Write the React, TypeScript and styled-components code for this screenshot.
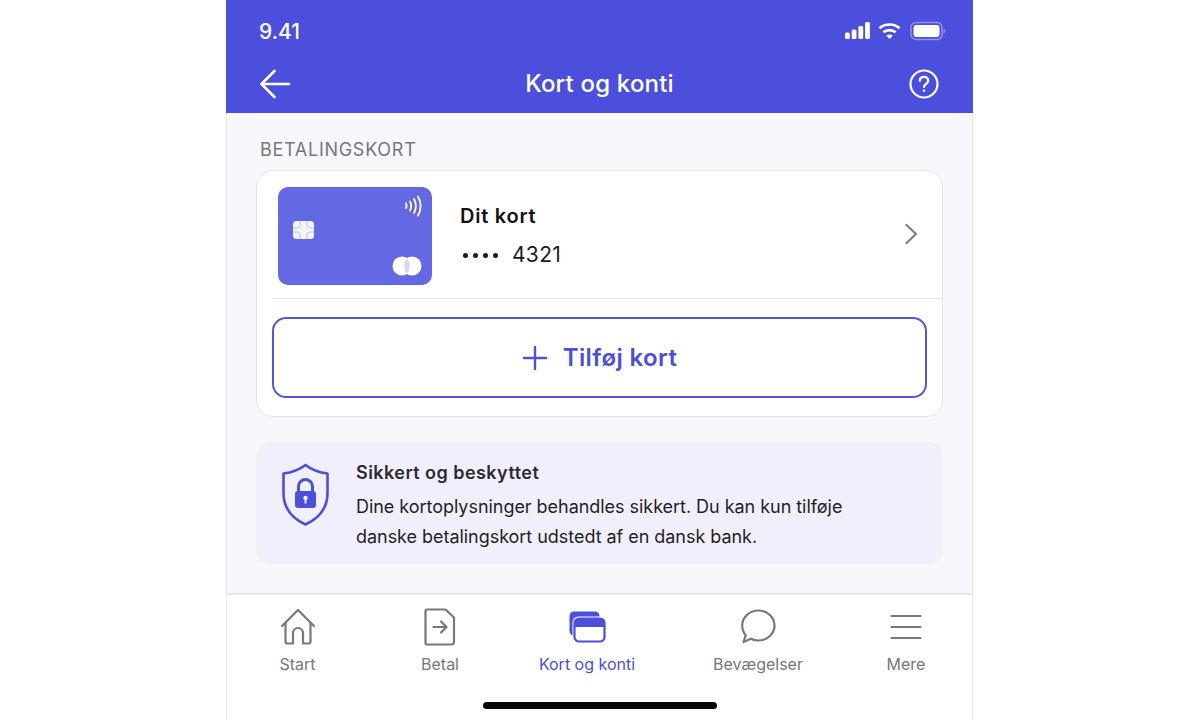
import React from 'react';
import styled, { createGlobalStyle } from 'styled-components';

const GlobalStyle = createGlobalStyle`
  html, body {
    margin: 0;
    padding: 0;
    height: 100%;
    background: #ffffff;
    font-family: Inter, "Liberation Sans", sans-serif;
    overflow: hidden;
  }
`;

const Page = styled.div`
  width: 1200px;
  height: 720px;
  box-sizing: border-box;
  padding-left: 226px;
  display: flex;
  background: #ffffff;
`;

const Phone = styled.div`
  width: 747px;
  height: 720px;
  box-sizing: border-box;
  display: flex;
  flex-direction: column;
  background: #f8f7fc;
  border-left: 1px solid #e6e6ee;
  border-right: 1px solid #e6e6ee;
`;

const Header = styled.header`
  height: 113px;
  margin: 0 -1px;
  flex-shrink: 0;
  background: #4b4fdb;
  color: #ffffff;
  display: flex;
  flex-direction: column;
`;

const StatusBar = styled.div`
  height: 62px;
  padding: 0 27px 0 33px;
  display: flex;
  align-items: center;
  justify-content: space-between;
  font-size: 21px;
  font-weight: 500;
`;

const StatusIcons = styled.div`
  display: flex;
  align-items: center;
  gap: 8px;
`;

const NavBar = styled.div`
  height: 44px;
  padding: 0 34px 0 33px;
  display: flex;
  align-items: center;
  justify-content: space-between;
`;

const Title = styled.h1`
  margin: 0 0 0 -1px;
  font-size: 24px;
  font-weight: 500;
  letter-spacing: 0.2px;
  line-height: 44px;
`;

const Content = styled.main`
  flex: 1;
  padding: 0 29px;
  display: flex;
  flex-direction: column;
`;

const SectionLabel = styled.div`
  height: 57px;
  box-sizing: border-box;
  padding: 25px 0 0 4px;
  font-size: 18px;
  line-height: 24px;
  letter-spacing: 0.72px;
  color: #77777f;
`;

const CardPanel = styled.section`
  height: 247px;
  box-sizing: border-box;
  background: #ffffff;
  border: 1px solid #e4e4ea;
  border-radius: 16px;
  padding: 16px 15px 18px 15px;
  display: flex;
  flex-direction: column;
`;

const CardRow = styled.div`
  height: 112px;
  box-sizing: border-box;
  padding: 0 24px 13px 6px;
  margin-right: -15px;
  border-bottom: 1px solid #e3e3e8;
  display: flex;
  align-items: flex-start;
`;

const BankCard = styled.div`
  position: relative;
  width: 154px;
  height: 98px;
  flex-shrink: 0;
  border-radius: 10px;
  background: #6568e3;
`;

const CardGlyph = styled.svg<{ $left: number; $top: number }>`
  position: absolute;
  left: ${(p) => p.$left}px;
  top: ${(p) => p.$top}px;
`;

const CardInfo = styled.div`
  flex: 1;
  margin-left: 28px;
  display: flex;
  flex-direction: column;
`;

const CardName = styled.div`
  margin-top: 15px;
  font-size: 20px;
  line-height: 28px;
  font-weight: 600;
  letter-spacing: 0.75px;
  color: #111114;
`;

const CardNumber = styled.div`
  margin-top: 11px;
  padding-left: 3px;
  font-size: 21px;
  line-height: 28px;
  letter-spacing: 0.3px;
  color: #1b1b20;
  display: flex;
  align-items: center;
  gap: 14px;
`;

const Dots = styled.span`
  display: flex;
  gap: 5px;
`;

const Dot = styled.i`
  width: 5px;
  height: 5px;
  border-radius: 50%;
  background: #1b1b20;
`;

const Chevron = styled.svg`
  margin-top: 35px;
`;

const AddButton = styled.button`
  height: 81px;
  margin-top: 18px;
  width: 655px;
  box-sizing: border-box;
  border: 2px solid #5356da;
  border-radius: 14px;
  background: #ffffff;
  color: #4b4fdb;
  font-family: inherit;
  font-size: 24px;
  font-weight: 600;
  letter-spacing: 0.4px;
  display: flex;
  align-items: center;
  justify-content: center;
  gap: 15px;
`;

const InfoBox = styled.aside`
  height: 122px;
  margin-top: 25px;
  box-sizing: border-box;
  border-radius: 14px;
  background: #f1effb;
  padding: 19px 20px 0 25px;
  display: flex;
  gap: 26px;
`;

const InfoText = styled.div`
  display: flex;
  flex-direction: column;
`;

const InfoTitle = styled.div`
  font-size: 18px;
  line-height: 24px;
  font-weight: 600;
  letter-spacing: 0.45px;
  color: #2b2b31;
`;

const InfoBody = styled.p`
  margin: 7px 0 0;
  font-size: 18px;
  line-height: 30px;
  letter-spacing: -0.04px;
  color: #1f1f25;
`;

const TabBar = styled.nav`
  position: relative;
  height: 127px;
  flex-shrink: 0;
  box-sizing: border-box;
  background: #ffffff;
  border-top: 2px solid #e6e6ee;
  display: grid;
  grid-template-columns: 141px 144px 150px 192px 104px;
  align-items: start;
`;

const Tab = styled.div<{ $active?: boolean }>`
  display: flex;
  flex-direction: column;
  align-items: center;
  color: ${(p) => (p.$active ? '#4b4fdb' : '#77777c')};
  font-size: 16px;
  line-height: 20px;
`;

const TabIcon = styled.div`
  height: 44px;
  margin-top: 10px;
  margin-bottom: 5px;
  display: flex;
  align-items: center;
  justify-content: center;
`;

const HomeIndicator = styled.div`
  position: absolute;
  left: 256px;
  bottom: 11px;
  width: 234px;
  height: 7px;
  border-radius: 4px;
  background: #050505;
`;

const App: React.FC = () => (
  <Page>
    <GlobalStyle />
    <Phone>
      <Header>
        <StatusBar>
          <span>9.41</span>
          <StatusIcons>
            <svg width="25" height="18" viewBox="0 0 25 18" fill="#fff">
              <rect x="0" y="10.500" width="4.800" height="6.500" rx="1.500" />
              <rect x="6.700" y="7.500" width="4.800" height="9.500" rx="1.500" />
              <rect x="13.400" y="4" width="4.800" height="13" rx="1.500" />
              <rect x="20.100" y="0" width="4.800" height="17" rx="1.500" />
            </svg>
            <svg width="23" height="18" viewBox="0 0 24 18" fill="none" stroke="#fff" strokeWidth="2.800">
              <path d="M1.500 6.200C7.400.9 16.600.9 22.500 6.200" />
              <path d="M5.600 10.400c3.700-3.200 9.100-3.200 12.800 0" />
              <path d="M12 17.400l-3.400-3.500c2-1.500 4.800-1.500 6.800 0z" fill="#fff" stroke="none" />
            </svg>
            <svg width="36" height="20" viewBox="0 0 36 20" style={{ marginLeft: 1 }}>
              <rect x="1" y="1.500" width="31" height="17" rx="5" fill="none" stroke="#8f92ea" strokeWidth="1.500" />
              <rect x="3.500" y="4" width="26" height="12" rx="3" fill="#fff" />
              <path d="M33.500 7.500c1.300.4 1.800 1.300 1.800 2.500s-.5 2.100-1.800 2.500z" fill="#8f92ea" />
            </svg>
          </StatusIcons>
        </StatusBar>
        <NavBar>
          <svg width="32" height="30" viewBox="0 0 32 30" fill="none" stroke="#fff" strokeWidth="2.600" strokeLinecap="round" strokeLinejoin="round">
            <path d="M30 15H3" />
            <path d="M15.500 2L2.500 15l13 13" />
          </svg>
          <Title>Kort og konti</Title>
          <svg width="30" height="30" viewBox="0 0 30 30" fill="none" stroke="#fff" strokeWidth="2.200" strokeLinecap="round">
            <circle cx="15" cy="15" r="13.500" />
            <path d="M10.800 11.800c0-2.500 1.900-4 4.200-4s4.200 1.500 4.200 3.800c0 3.300-4.200 3.300-4.200 6.500" />
            <circle cx="15" cy="21.800" r="1.200" fill="#fff" stroke="none" />
          </svg>
        </NavBar>
      </Header>
      <Content>
        <SectionLabel>BETALINGSKORT</SectionLabel>
        <CardPanel>
          <CardRow>
            <BankCard>
              <CardGlyph $left={126} $top={8} width="18" height="22" viewBox="0 0 18 22" fill="none" stroke="#fff" strokeWidth="1.800" strokeLinecap="round">
                <path d="M2 8.500c.8 1.400.8 3.300 0 4.800" />
                <path d="M6 6.500c1.500 2.700 1.500 6.300 0 9" />
                <path d="M10 4c2.300 4.300 2.300 9.700 0 14" />
                <path d="M14 1.500c3.200 5.800 3.200 13.200 0 19" />
              </CardGlyph>
              <CardGlyph $left={15} $top={34} width="21" height="18" viewBox="0 0 21 18">
                <rect width="21" height="18" rx="3.500" fill="#f4f4fd" />
                <path d="M7 0v5L5 7H0M14 0v5l2 2h5M7 18v-5l-2-2H0M14 18v-5l2-2h5" fill="none" stroke="#b9bbf2" strokeWidth="1" />
              </CardGlyph>
              <CardGlyph $left={114} $top={69} width="30" height="20" viewBox="0 0 30 20">
                <circle cx="10" cy="10" r="9.500" fill="#fff" />
                <circle cx="20" cy="10" r="9.500" fill="#fff" />
                <path d="M15 2.500c-3.600 4-3.600 11 0 15 3.600-4 3.600-11 0-15z" fill="#d6d7f7" />
              </CardGlyph>
            </BankCard>
            <CardInfo>
              <CardName>Dit kort</CardName>
              <CardNumber>
                <Dots>
                  <Dot />
                  <Dot />
                  <Dot />
                  <Dot />
                </Dots>
                4321
              </CardNumber>
            </CardInfo>
            <Chevron width="14" height="24" viewBox="0 0 14 24" fill="none" stroke="#808086" strokeWidth="2.400" strokeLinecap="round" strokeLinejoin="round">
              <path d="M2.500 3l9.500 9-9.500 9" />
            </Chevron>
          </CardRow>
          <AddButton>
            <svg width="26" height="26" viewBox="0 0 26 26" fill="none" stroke="#4b4fdb" strokeWidth="2.400" strokeLinecap="round">
              <path d="M13 2v22M2 13h22" />
            </svg>
            Tilføj kort
          </AddButton>
        </CardPanel>
        <InfoBox>
          <svg width="49" height="64" viewBox="0 0 49 64" fill="none" style={{ flexShrink: 0, marginTop: 2 }}>
            <path d="M24.500 2C31 7 38 9.500 46.500 10.500V30c0 15-9 25.500-22 31.500C11.500 55.500 2.500 45 2.500 30V10.500C11 9.500 18 7 24.500 2z" stroke="#4b4fdb" strokeWidth="2.600" strokeLinejoin="round" />
            <path d="M17.500 29v-5.500a7 7 0 0 1 14 0V29" stroke="#4b4fdb" strokeWidth="3" />
            <rect x="14" y="28" width="21" height="17" rx="3" fill="#4b4fdb" />
            <circle cx="24.500" cy="35" r="2.200" fill="#f1effb" />
            <rect x="23.600" y="35.500" width="1.800" height="5" fill="#f1effb" />
          </svg>
          <InfoText>
            <InfoTitle>Sikkert og beskyttet</InfoTitle>
            <InfoBody>
              Dine kortoplysninger behandles sikkert. Du kan kun tilføje
              <br />
              danske betalingskort udstedt af en dansk bank.
            </InfoBody>
          </InfoText>
        </InfoBox>
      </Content>
      <TabBar>
        <Tab>
          <TabIcon>
            <svg width="36" height="38" viewBox="0 0 36 38" fill="none" stroke="#77777c" strokeWidth="2.200" strokeLinecap="round" strokeLinejoin="round">
              <path d="M2 18L18 2l16 16" />
              <path d="M5.500 15v18.500a2 2 0 0 0 2 2h5.500V25a5 5 0 0 1 10 0v10.500h5.500a2 2 0 0 0 2-2V15" />
            </svg>
          </TabIcon>
          Start
        </Tab>
        <Tab>
          <TabIcon>
            <svg width="32" height="38" viewBox="0 0 32 38" fill="none" stroke="#77777c" strokeWidth="2.200" strokeLinecap="round" strokeLinejoin="round">
              <path d="M3 1.500h18.500L30 9.500V34a2.500 2.500 0 0 1-2.500 2.500H3A1.500 1.500 0 0 1 1.500 35V3A1.500 1.500 0 0 1 3 1.500z" />
              <path d="M9.500 19h12.500M17 13.500l5.500 5.500-5.500 5.500" />
            </svg>
          </TabIcon>
          Betal
        </Tab>
        <Tab $active>
          <TabIcon>
            <svg width="38" height="32" viewBox="0 0 38 32">
              <rect x="1.500" y="0.500" width="30" height="24" rx="4.500" fill="#4b4fdb" />
              <rect x="4.500" y="5.500" width="33" height="26.500" rx="6" fill="#fff" />
              <rect x="6.500" y="7.500" width="30" height="23" rx="4.500" fill="#fff" stroke="#4b4fdb" strokeWidth="2.200" />
              <path d="M11 7.500h21a4.500 4.500 0 0 1 4.500 4.500v4h-30v-4a4.500 4.500 0 0 1 4.500-4.500z" fill="#4b4fdb" />
            </svg>
          </TabIcon>
          Kort og konti
        </Tab>
        <Tab>
          <TabIcon>
            <svg width="36" height="36" viewBox="0 0 36 36" fill="none" stroke="#77777c" strokeWidth="2.200" strokeLinejoin="round">
              <path d="M18.500 1.500c9 0 16 6.800 16 15s-7 15-16 15c-2.800 0-5.300-.6-7.500-1.800l-7.500 3.300 2.200-6.700C3.500 23.600 2.200 20.300 2.200 16.500c0-8.200 7.300-15 16.300-15z" />
            </svg>
          </TabIcon>
          Bevægelser
        </Tab>
        <Tab>
          <TabIcon>
            <svg width="32" height="26" viewBox="0 0 32 26" stroke="#77777c" strokeWidth="2.200" strokeLinecap="round">
              <path d="M1.500 2h29M1.500 13h29M1.500 24h29" />
            </svg>
          </TabIcon>
          Mere
        </Tab>
        <HomeIndicator />
      </TabBar>
    </Phone>
  </Page>
);

export default App;
